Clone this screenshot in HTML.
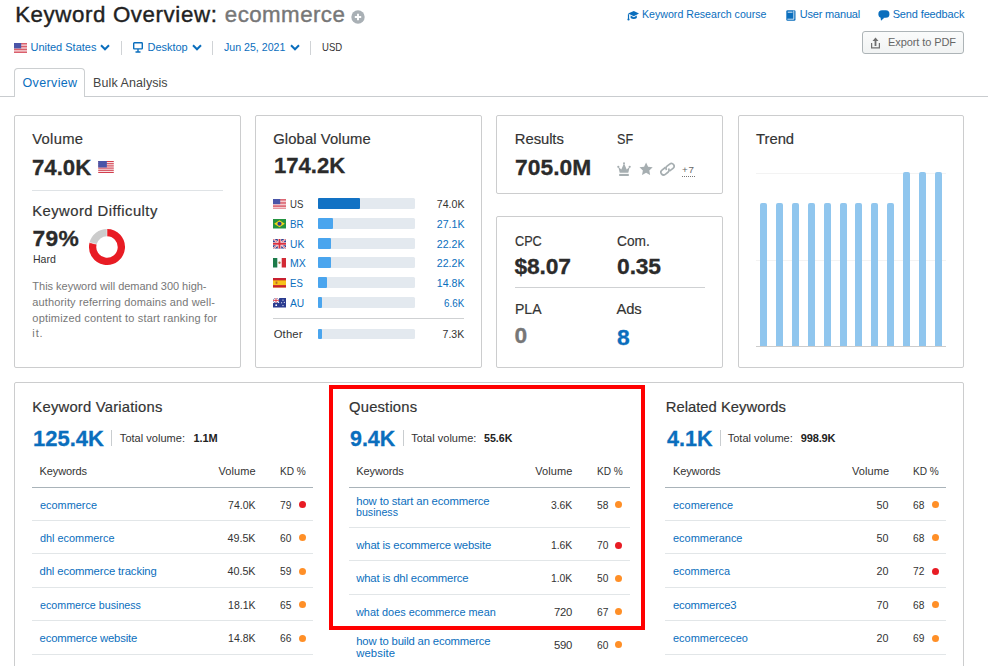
<!DOCTYPE html>
<html lang="en">
<head>
<meta charset="utf-8">
<title>Keyword Overview: ecommerce</title>
<style>
*{box-sizing:border-box;margin:0;padding:0}
html,body{width:988px;height:666px;overflow:hidden;background:#fff}
body{font-family:"Liberation Sans",sans-serif;color:#333;position:relative;font-size:12px}
.a{position:absolute;white-space:nowrap}
.t{position:absolute;white-space:nowrap;line-height:1}
.b{font-weight:bold}
.card{position:absolute;border:1px solid #cccdce;border-radius:2px;background:#fff}
.hl{position:absolute;background:#e3e5e6;height:1px}
.bar{position:absolute;height:11px;background:#e3e9ef;border-radius:1.5px;width:97px}
.bar i{position:absolute;left:0;top:0;height:11px;background:#4aa5ee;border-radius:1px;display:block}
.dot{position:absolute;width:7px;height:7px;border-radius:50%;background:#ff8f27}
.dot.r{background:#e81c24}
.tb{position:absolute;width:7px;background:#90c6ee;border-radius:2px 2px 0 0}
</style>
</head>
<body>
<svg class="a" style="left:351px;top:10px" width="14" height="14" viewBox="0 0 14 14"><circle cx="7" cy="7" r="6.7" fill="#a9b0b5"/><path d="M7 3.800v6.400M3.800 7h6.400" stroke="#fff" stroke-width="1.900"/></svg>
<svg class="a" style="left:14px;top:43px" width="13" height="10" viewBox="0 0 13 10"><rect width="13" height="10" fill="#fff"/><g fill="#cf3040"><rect y="0.00" width="13" height="0.77"/><rect y="1.54" width="13" height="0.77"/><rect y="3.08" width="13" height="0.77"/><rect y="4.61" width="13" height="0.77"/><rect y="6.15" width="13" height="0.77"/><rect y="7.69" width="13" height="0.77"/><rect y="9.23" width="13" height="0.77"/></g><rect width="7.200" height="5.400" fill="#4a55a8"/></svg>
<svg class="a" style="left:100.3px;top:44.300px" width="10" height="7" viewBox="0 0 10 7"><path d="M1 1.300l4 4 4-4" fill="none" stroke="#0a6ebd" stroke-width="2"/></svg>
<div class="a" style="left:121px;top:41px;width:1px;height:14px;background:#d0d3d6"></div>
<svg class="a" style="left:133px;top:42px" width="10" height="11" viewBox="0 0 10 11"><rect x="0.700" y="0.700" width="8.600" height="6.200" rx="0.700" fill="none" stroke="#0a6ebd" stroke-width="1.400"/><path d="M5 7v2.600M2.500 10h5" stroke="#0a6ebd" stroke-width="1.400" fill="none"/></svg>
<svg class="a" style="left:191.5px;top:44.300px" width="10" height="7" viewBox="0 0 10 7"><path d="M1 1.300l4 4 4-4" fill="none" stroke="#0a6ebd" stroke-width="2"/></svg>
<div class="a" style="left:212px;top:41px;width:1px;height:14px;background:#d0d3d6"></div>
<svg class="a" style="left:290px;top:44.300px" width="10" height="7" viewBox="0 0 10 7"><path d="M1 1.300l4 4 4-4" fill="none" stroke="#0a6ebd" stroke-width="2"/></svg>
<div class="a" style="left:310px;top:41px;width:1px;height:14px;background:#d0d3d6"></div>
<svg class="a" style="left:626.500px;top:10px" width="12" height="11" viewBox="0 0 12 11"><path d="M1 3.600L6.800 1 12 3.600 6.800 6.200z" fill="#0a6ebd"/><path d="M3.600 5.600v2.400c1.700 1.300 4.500 1.300 6.200 0V5.600L6.800 7.200z" fill="#0a6ebd"/><path d="M1.500 4.200v5" stroke="#0a6ebd" stroke-width="1.200"/><circle cx="1.500" cy="9.500" r="1.100" fill="#0a6ebd"/></svg>
<svg class="a" style="left:785.500px;top:10px" width="10" height="11" viewBox="0 0 10 11"><rect x="0.300" y="0.300" width="9.200" height="10.400" rx="1.300" fill="#0a6ebd"/><rect x="1.700" y="1.700" width="4.800" height="0.900" fill="#fff"/><path d="M7.800 0.600V9.200H1.400" fill="none" stroke="#fff" stroke-width="0.800"/></svg>
<svg class="a" style="left:877.500px;top:10px" width="12" height="11" viewBox="0 0 12 11"><rect x="0.400" y="0.200" width="11" height="7.600" rx="3.600" fill="#0a6ebd"/><path d="M2.400 6.500L3 10.700 6.600 7.400z" fill="#0a6ebd"/></svg>
<div class="a" style="left:862px;top:31px;width:102px;height:23px;border:1px solid #adb4b7;border-radius:3px;background:linear-gradient(#fafbfb,#f1f3f3)"></div>
<svg class="a" style="left:870px;top:36.500px" width="11" height="12" viewBox="0 0 11 12"><path d="M1.600 5.900V10.900H9.400V5.900" fill="none" stroke="#707070" stroke-width="1.200"/><path d="M5.500 0.600L8.500 4H6.400V8.900H4.600V4H2.500z" fill="#707070"/></svg>
<div class="hl" style="left:0;top:96px;width:988px;background:#c9cccf"></div>
<div class="a" style="left:14px;top:68px;width:71px;height:29px;border:1px solid #cccfd1;border-bottom:0;border-radius:4px 4px 0 0;background:#fff"></div>
<div class="card" style="left:14px;top:115px;width:227px;height:253px"></div>
<div class="card" style="left:255px;top:115px;width:227px;height:253px"></div>
<div class="card" style="left:496px;top:115px;width:227px;height:79px"></div>
<div class="card" style="left:496px;top:216px;width:227px;height:152px"></div>
<div class="card" style="left:738px;top:115px;width:226px;height:253px"></div>
<div class="card" style="left:14px;top:382px;width:950px;height:300px"></div>
<svg class="a" style="left:97.500px;top:161px" width="16" height="12" viewBox="0 0 13 10"><rect width="13" height="10" fill="#fff"/><g fill="#cf3040"><rect y="0.00" width="13" height="0.77"/><rect y="1.54" width="13" height="0.77"/><rect y="3.08" width="13" height="0.77"/><rect y="4.61" width="13" height="0.77"/><rect y="6.15" width="13" height="0.77"/><rect y="7.69" width="13" height="0.77"/><rect y="9.23" width="13" height="0.77"/></g><rect width="7.200" height="5.400" fill="#4a55a8"/></svg>
<div class="hl" style="left:32px;top:190px;width:191px;background:#dfe3e6"></div>
<svg class="a" style="left:87px;top:226.900px" width="40" height="40" viewBox="-20 -20 40 40"><path d="M0 -14.35A14.35 14.35 0 1 1 -13.90 -3.57" fill="none" stroke="#e81c24" stroke-width="7.300"/><path d="M0 -14.35A14.35 14.35 0 0 0 -13.90 -3.57" fill="none" stroke="#cccccc" stroke-width="7.300"/><path d="M0 -10.500V-18.200M-10.17 -2.61L-17.63 -4.53" stroke="#fff" stroke-width="0.500"/></svg>
<svg class="a" style="left:273px;top:199.2px" width="13" height="9.500" viewBox="0 0 13 10" preserveAspectRatio="none"><rect width="13" height="10" fill="#fff"/><g fill="#cf3040"><rect y="0.00" width="13" height="0.77"/><rect y="1.54" width="13" height="0.77"/><rect y="3.08" width="13" height="0.77"/><rect y="4.61" width="13" height="0.77"/><rect y="6.15" width="13" height="0.77"/><rect y="7.69" width="13" height="0.77"/><rect y="9.23" width="13" height="0.77"/></g><rect width="7.200" height="5.400" fill="#4a55a8"/></svg>
<div class="bar" style="left:318px;top:198px"><i style="width:42px;background:#1272c4"></i></div>
<svg class="a" style="left:273px;top:219.2px" width="13" height="9.500" viewBox="0 0 13 10" preserveAspectRatio="none"><rect width="13" height="10" fill="#259440"/><path d="M6.500 1.200L11.800 5 6.500 8.800 1.200 5z" fill="#f7d417"/><circle cx="6.500" cy="5" r="2.100" fill="#2b3f95"/></svg>
<div class="bar" style="left:318px;top:218px"><i style="width:15px;"></i></div>
<svg class="a" style="left:273px;top:239.2px" width="13" height="9.500" viewBox="0 0 13 10" preserveAspectRatio="none"><rect width="13" height="10" fill="#2f3f8f"/><path d="M0 0L13 10M13 0L0 10" stroke="#fff" stroke-width="1.800"/><path d="M0 0L13 10M13 0L0 10" stroke="#d9303f" stroke-width="0.700"/><path d="M6.500 0v10M0 5h13" stroke="#fff" stroke-width="3.400"/><path d="M6.500 0v10M0 5h13" stroke="#d9303f" stroke-width="2"/></svg>
<div class="bar" style="left:318px;top:238px"><i style="width:13px;"></i></div>
<svg class="a" style="left:273px;top:258.2px" width="13" height="9.500" viewBox="0 0 13 10" preserveAspectRatio="none"><rect width="13" height="10" fill="#fff"/><rect width="4.300" height="10" fill="#1d7a4a"/><rect x="8.700" width="4.300" height="10" fill="#d22b35"/><circle cx="6.500" cy="5" r="1.200" fill="#a0794a"/></svg>
<div class="bar" style="left:318px;top:257px"><i style="width:13px;"></i></div>
<svg class="a" style="left:273px;top:278.2px" width="13" height="9.500" viewBox="0 0 13 10" preserveAspectRatio="none"><rect width="13" height="10" fill="#f6c21b"/><rect width="13" height="2.500" fill="#c8202f"/><rect y="7.500" width="13" height="2.500" fill="#c8202f"/><rect x="2.600" y="3.700" width="1.800" height="2.400" fill="#b5652a"/></svg>
<div class="bar" style="left:318px;top:277px"><i style="width:9px;"></i></div>
<svg class="a" style="left:273px;top:298.2px" width="13" height="9.500" viewBox="0 0 13 10" preserveAspectRatio="none"><rect width="13" height="10" fill="#2a3b8f"/><path d="M0 0L6 5M6 0L0 5" stroke="#fff" stroke-width="1.200"/><path d="M3 0v5M0 2.500h6" stroke="#fff" stroke-width="1.800"/><path d="M3 0v5M0 2.500h6" stroke="#d9303f" stroke-width="0.900"/><circle cx="3.200" cy="7.600" r="0.900" fill="#fff"/><circle cx="10" cy="2.200" r="0.600" fill="#fff"/><circle cx="11.300" cy="4.600" r="0.600" fill="#fff"/><circle cx="10" cy="8" r="0.600" fill="#fff"/><circle cx="8.600" cy="5" r="0.600" fill="#fff"/></svg>
<div class="bar" style="left:318px;top:297px"><i style="width:4px;"></i></div>
<div class="hl" style="left:273px;top:318px;width:191px;background:#cfd1d3"></div>
<div class="bar" style="left:318px;top:329px;height:10px"><i style="width:4px;height:10px"></i></div>
<svg class="a" style="left:617px;top:161.500px" width="14" height="14.500" viewBox="0 0 14 14.500"><path d="M1.300 4.800L4.300 7.400 7 1.200 9.700 7.400 12.700 4.800 11.300 10.800H2.700z" fill="#a6aeb1"/><circle cx="7" cy="1.300" r="1" fill="#a6aeb1"/><circle cx="1.300" cy="4.800" r="1.100" fill="#a6aeb1"/><circle cx="12.700" cy="4.800" r="1.100" fill="#a6aeb1"/><rect x="2.200" y="11.900" width="9.600" height="2.200" fill="#a6aeb1"/></svg>
<svg class="a" style="left:638.800px;top:162px" width="14.200" height="13.300" viewBox="0 0 15 14"><path d="M7.500 0.500l2.100 4.500 4.900 0.600-3.600 3.400 0.900 4.800-4.300-2.400-4.300 2.400 0.900-4.800L0.500 5.600l4.900-0.600z" fill="#a6aeb1"/></svg>
<svg class="a" style="left:660px;top:161.800px" width="15" height="14.400" viewBox="0 0 15 14.400"><g transform="translate(7.500,7.200) rotate(-38)" fill="none" stroke="#a6aeb1" stroke-width="1.700"><path d="M-0.300 -2.700H-4.900A2.700 2.700 0 0 0 -4.900 2.700H-1.500A2.700 2.700 0 0 0 1.200 0"/><path d="M0.300 2.700H4.900A2.700 2.700 0 0 0 4.900 -2.700H1.500A2.700 2.700 0 0 0 -1.200 0"/></g></svg>
<div class="a" style="left:681.500px;top:176px;width:13px;height:0;border-top:1px dotted #777"></div>
<div class="hl" style="left:515px;top:287px;width:190px;background:#cfd1d3"></div>
<div class="hl" style="left:756px;top:172.500px;width:190px;background:#f3f3f3"></div>
<div class="hl" style="left:756px;top:259.700px;width:190px;background:#f3f3f3"></div>
<div class="tb" style="left:760.0px;top:203px;height:143px"></div>
<div class="tb" style="left:775.9px;top:203px;height:143px"></div>
<div class="tb" style="left:791.8px;top:203px;height:143px"></div>
<div class="tb" style="left:807.7px;top:203px;height:143px"></div>
<div class="tb" style="left:823.6px;top:203px;height:143px"></div>
<div class="tb" style="left:839.5px;top:203px;height:143px"></div>
<div class="tb" style="left:855.4px;top:203px;height:143px"></div>
<div class="tb" style="left:871.3px;top:203px;height:143px"></div>
<div class="tb" style="left:887.2px;top:203px;height:143px"></div>
<div class="tb" style="left:903.1px;top:172px;height:174px"></div>
<div class="tb" style="left:919.0px;top:172px;height:174px"></div>
<div class="tb" style="left:934.9px;top:172px;height:174px"></div>
<div class="hl" style="left:756px;top:346px;width:190px;background:#cccccc"></div>
<div class="a" style="left:111.0px;top:430px;width:1px;height:16px;background:#c9cdd0"></div>
<div class="hl" style="left:32.0px;top:487px;width:281px;background:#a9b3b9"></div>
<div class="hl" style="left:32.0px;top:520px;width:281px;background:#e2e6e8"></div>
<div class="hl" style="left:32.0px;top:553px;width:281px;background:#e2e6e8"></div>
<div class="hl" style="left:32.0px;top:587px;width:281px;background:#e2e6e8"></div>
<div class="hl" style="left:32.0px;top:620px;width:281px;background:#e2e6e8"></div>
<div class="hl" style="left:32.0px;top:654px;width:281px;background:#e2e6e8"></div>
<div class="dot r" style="left:298.5px;top:501.3px"></div>
<div class="dot" style="left:298.5px;top:534.3px"></div>
<div class="dot" style="left:298.5px;top:567.7px"></div>
<div class="dot" style="left:298.5px;top:601.4px"></div>
<div class="dot" style="left:298.5px;top:634.7px"></div>
<div class="a" style="left:403.0px;top:430px;width:1px;height:16px;background:#c9cdd0"></div>
<div class="hl" style="left:348.7px;top:487px;width:281px;background:#a9b3b9"></div>
<div class="hl" style="left:348.7px;top:527px;width:281px;background:#e2e6e8"></div>
<div class="hl" style="left:348.7px;top:560px;width:281px;background:#e2e6e8"></div>
<div class="hl" style="left:348.7px;top:594px;width:281px;background:#e2e6e8"></div>
<div class="hl" style="left:348.7px;top:628px;width:281px;background:#e2e6e8"></div>
<div class="dot" style="left:615.2px;top:501.3px"></div>
<div class="dot r" style="left:615.2px;top:541.5px"></div>
<div class="dot" style="left:615.2px;top:574.8px"></div>
<div class="dot" style="left:615.2px;top:608.2px"></div>
<div class="dot" style="left:615.2px;top:641.2px"></div>
<div class="a" style="left:719.5px;top:430px;width:1px;height:16px;background:#c9cdd0"></div>
<div class="hl" style="left:665.4px;top:487px;width:281px;background:#a9b3b9"></div>
<div class="hl" style="left:665.4px;top:520px;width:281px;background:#e2e6e8"></div>
<div class="hl" style="left:665.4px;top:553px;width:281px;background:#e2e6e8"></div>
<div class="hl" style="left:665.4px;top:587px;width:281px;background:#e2e6e8"></div>
<div class="hl" style="left:665.4px;top:620px;width:281px;background:#e2e6e8"></div>
<div class="hl" style="left:665.4px;top:654px;width:281px;background:#e2e6e8"></div>
<div class="dot" style="left:931.9px;top:501.3px"></div>
<div class="dot" style="left:931.9px;top:534.3px"></div>
<div class="dot r" style="left:931.9px;top:567.7px"></div>
<div class="dot" style="left:931.9px;top:601.4px"></div>
<div class="dot" style="left:931.9px;top:634.7px"></div>
<div class="a" style="left:329px;top:385px;width:316px;height:245px;border:4px solid #ff0000"></div>
<div class="t" style="top:4.00px;font-size:22.3px;color:#222;-webkit-text-stroke:0.4px #222;letter-spacing:0.603px;left:15.13px;">Keyword Overview:</div>
<div class="t" style="top:4.00px;font-size:22.3px;color:#777;-webkit-text-stroke:0.4px #777;letter-spacing:0.441px;left:224.83px;">ecommerce</div>
<div class="t" style="top:42.00px;font-size:11px;color:#0a6ebd;letter-spacing:-0.008px;left:30.47px;">United States</div>
<div class="t" style="top:42.00px;font-size:11px;color:#0a6ebd;letter-spacing:-0.035px;left:147.47px;">Desktop</div>
<div class="t" style="top:42.00px;font-size:11px;color:#0a6ebd;transform:scaleX(0.9642);transform-origin:0 0;left:224.17px;">Jun 25, 2021</div>
<div class="t" style="top:42.00px;font-size:11px;color:#333;transform:scaleX(0.8672);transform-origin:0 0;left:322.37px;">USD</div>
<div class="t" style="top:9.00px;font-size:11px;color:#0a6ebd;transform:scaleX(0.9646);transform-origin:0 0;left:642.07px;">Keyword Research course</div>
<div class="t" style="top:9.00px;font-size:11px;color:#0a6ebd;letter-spacing:-0.181px;left:799.67px;">User manual</div>
<div class="t" style="top:9.00px;font-size:11px;color:#0a6ebd;letter-spacing:-0.137px;left:892.67px;">Send feedback</div>
<div class="t" style="top:37.00px;font-size:11px;color:#666;letter-spacing:-0.094px;left:888.07px;">Export to PDF</div>
<div class="t" style="top:77.00px;font-size:12.5px;color:#0a6ebd;letter-spacing:0.362px;left:22.52px;">Overview</div>
<div class="t" style="top:77.00px;font-size:12.5px;color:#444;letter-spacing:0.072px;left:93.12px;">Bulk Analysis</div>
<div class="t" style="top:132.00px;font-size:14.8px;color:#333;-webkit-text-stroke:0.18px #333;letter-spacing:0.316px;left:32.16px;">Volume</div>
<div class="t b" style="top:156.00px;font-size:22.8px;color:#2b2b2b;-webkit-text-stroke:0.3px #2b2b2b;transform:scaleX(0.9736);transform-origin:0 0;left:32.42px;">74.0K</div>
<div class="t" style="top:204.00px;font-size:14.8px;color:#333;-webkit-text-stroke:0.18px #333;letter-spacing:0.454px;left:32.26px;">Keyword Difficulty</div>
<div class="t b" style="top:227.00px;font-size:22.8px;color:#2b2b2b;-webkit-text-stroke:0.3px #2b2b2b;letter-spacing:0.350px;left:32.52px;">79%</div>
<div class="t" style="top:254.00px;font-size:11px;color:#333;transform:scaleX(0.9583);transform-origin:0 0;left:32.67px;">Hard</div>
<div class="t" style="top:281.00px;font-size:11px;color:#777;letter-spacing:-0.022px;left:32.37px;">This keyword will demand 300 high-</div>
<div class="t" style="top:297.00px;font-size:11px;color:#777;letter-spacing:0.129px;left:32.37px;">authority referring domains and well-</div>
<div class="t" style="top:313.00px;font-size:11px;color:#777;letter-spacing:0.187px;left:32.37px;">optimized content to start ranking for</div>
<div class="t" style="top:328.00px;font-size:11px;color:#777;letter-spacing:0.844px;left:32.37px;">it.</div>
<div class="t" style="top:132.00px;font-size:14.8px;color:#333;-webkit-text-stroke:0.18px #333;letter-spacing:0.099px;left:273.26px;">Global Volume</div>
<div class="t b" style="top:154.00px;font-size:22.8px;color:#2b2b2b;-webkit-text-stroke:0.3px #2b2b2b;transform:scaleX(0.9690);transform-origin:0 0;left:274.32px;">174.2K</div>
<div class="t" style="top:199.00px;font-size:11.3px;color:#333;transform:scaleX(0.8500);transform-origin:0 0;left:289.96px;">US</div>
<div class="t" style="top:199.00px;font-size:11.3px;color:#333;transform:scaleX(0.9402);transform-origin:100% 0;right:523.56px;">74.0K</div>
<div class="t" style="top:219.00px;font-size:11.3px;color:#0a6ebd;transform:scaleX(0.8702);transform-origin:0 0;left:289.96px;">BR</div>
<div class="t" style="top:219.00px;font-size:11.3px;color:#0a6ebd;transform:scaleX(0.9402);transform-origin:100% 0;right:523.56px;">27.1K</div>
<div class="t" style="top:239.00px;font-size:11.3px;color:#0a6ebd;transform:scaleX(0.9084);transform-origin:0 0;left:289.96px;">UK</div>
<div class="t" style="top:239.00px;font-size:11.3px;color:#0a6ebd;transform:scaleX(0.9402);transform-origin:100% 0;right:523.56px;">22.2K</div>
<div class="t" style="top:258.00px;font-size:11.3px;color:#0a6ebd;transform:scaleX(0.9299);transform-origin:0 0;left:289.96px;">MX</div>
<div class="t" style="top:258.00px;font-size:11.3px;color:#0a6ebd;transform:scaleX(0.9402);transform-origin:100% 0;right:523.56px;">22.2K</div>
<div class="t" style="top:278.00px;font-size:11.3px;color:#0a6ebd;transform:scaleX(0.8500);transform-origin:0 0;left:289.96px;">ES</div>
<div class="t" style="top:278.00px;font-size:11.3px;color:#0a6ebd;transform:scaleX(0.9402);transform-origin:100% 0;right:523.56px;">14.8K</div>
<div class="t" style="top:298.00px;font-size:11.3px;color:#0a6ebd;transform:scaleX(0.9084);transform-origin:0 0;left:289.96px;">AU</div>
<div class="t" style="top:298.00px;font-size:11.3px;color:#0a6ebd;transform:scaleX(0.8673);transform-origin:100% 0;right:523.56px;">6.6K</div>
<div class="t" style="top:329.00px;font-size:11.3px;color:#333;letter-spacing:0.150px;left:273.66px;">Other</div>
<div class="t" style="top:329.00px;font-size:11.3px;color:#333;transform:scaleX(0.9318);transform-origin:100% 0;right:523.56px;">7.3K</div>
<div class="t" style="top:132.00px;font-size:14.8px;color:#333;-webkit-text-stroke:0.18px #333;letter-spacing:-0.067px;left:514.86px;">Results</div>
<div class="t" style="top:132.00px;font-size:14.8px;color:#333;-webkit-text-stroke:0.18px #333;transform:scaleX(0.8500);transform-origin:0 0;left:616.56px;">SF</div>
<div class="t b" style="top:156.00px;font-size:22.8px;color:#2b2b2b;-webkit-text-stroke:0.3px #2b2b2b;letter-spacing:-0.001px;left:515.12px;">705.0M</div>
<div class="t" style="top:165.00px;font-size:9.8px;color:#666;letter-spacing:0.882px;left:681.91px;">+7</div>
<div class="t" style="top:234.00px;font-size:14.8px;color:#333;-webkit-text-stroke:0.18px #333;transform:scaleX(0.8557);transform-origin:0 0;left:514.76px;">CPC</div>
<div class="t" style="top:234.00px;font-size:14.8px;color:#333;-webkit-text-stroke:0.18px #333;transform:scaleX(0.9259);transform-origin:0 0;left:617.36px;">Com.</div>
<div class="t b" style="top:255.00px;font-size:22.8px;color:#2b2b2b;-webkit-text-stroke:0.3px #2b2b2b;letter-spacing:-0.156px;left:514.52px;">$8.07</div>
<div class="t b" style="top:255.00px;font-size:22.8px;color:#2b2b2b;-webkit-text-stroke:0.3px #2b2b2b;letter-spacing:-0.145px;left:617.12px;">0.35</div>
<div class="t" style="top:302.00px;font-size:14.8px;color:#333;-webkit-text-stroke:0.18px #333;transform:scaleX(0.9489);transform-origin:0 0;left:514.76px;">PLA</div>
<div class="t" style="top:302.00px;font-size:14.8px;color:#333;-webkit-text-stroke:0.18px #333;letter-spacing:-0.130px;left:616.46px;">Ads</div>
<div class="t b" style="top:324.00px;font-size:22.8px;color:#777;-webkit-text-stroke:0.3px #777;left:514.52px;">0</div>
<div class="t b" style="top:326.00px;font-size:22.8px;color:#0a6ebd;-webkit-text-stroke:0.3px #0a6ebd;left:617.12px;">8</div>
<div class="t" style="top:132.00px;font-size:14.8px;color:#333;-webkit-text-stroke:0.18px #333;letter-spacing:-0.017px;left:756.06px;">Trend</div>
<div class="t" style="top:400.00px;font-size:14.8px;color:#333;-webkit-text-stroke:0.18px #333;letter-spacing:0.209px;left:32.36px;">Keyword Variations</div>
<div class="t b" style="top:427.00px;font-size:22.8px;color:#0a6ebd;-webkit-text-stroke:0.3px #0a6ebd;transform:scaleX(0.9636);transform-origin:0 0;left:33.32px;">125.4K</div>
<div class="t" style="top:433.00px;font-size:11px;color:#333;letter-spacing:0.028px;left:119.87px;">Total volume:</div>
<div class="t b" style="top:433.00px;font-size:11px;color:#222;letter-spacing:-0.106px;left:193.47px;">1.1M</div>
<div class="t" style="top:466.00px;font-size:11px;color:#333;letter-spacing:-0.107px;left:39.57px;">Keywords</div>
<div class="t" style="top:466.00px;font-size:11px;color:#333;letter-spacing:0.089px;right:732.28px;">Volume</div>
<div class="t" style="top:466.00px;font-size:11px;color:#333;transform:scaleX(0.9191);transform-origin:0 0;left:279.87px;">KD %</div>
<div class="t" style="top:500.00px;font-size:11.3px;color:#0a6ebd;transform:scaleX(0.9653);transform-origin:0 0;left:39.56px;">ecommerce</div>
<div class="t" style="top:500.00px;font-size:11.3px;color:#333;transform:scaleX(0.9300);transform-origin:100% 0;right:732.36px;">74.0K</div>
<div class="t" style="top:500.00px;font-size:11.3px;color:#333;transform:scaleX(0.9036);transform-origin:0 0;left:279.86px;">79</div>
<div class="t" style="top:533.00px;font-size:11.3px;color:#0a6ebd;transform:scaleX(0.9641);transform-origin:0 0;left:39.56px;">dhl ecommerce</div>
<div class="t" style="top:533.00px;font-size:11.3px;color:#333;transform:scaleX(0.9503);transform-origin:100% 0;right:732.36px;">49.5K</div>
<div class="t" style="top:533.00px;font-size:11.3px;color:#333;transform:scaleX(0.9036);transform-origin:0 0;left:279.86px;">60</div>
<div class="t" style="top:566.00px;font-size:11.3px;color:#0a6ebd;letter-spacing:-0.131px;left:39.56px;">dhl ecommerce tracking</div>
<div class="t" style="top:566.00px;font-size:11.3px;color:#333;transform:scaleX(0.9503);transform-origin:100% 0;right:732.36px;">40.5K</div>
<div class="t" style="top:566.00px;font-size:11.3px;color:#333;transform:scaleX(0.9036);transform-origin:0 0;left:279.86px;">59</div>
<div class="t" style="top:600.00px;font-size:11.3px;color:#0a6ebd;transform:scaleX(0.9458);transform-origin:0 0;left:39.56px;">ecommerce business</div>
<div class="t" style="top:600.00px;font-size:11.3px;color:#333;transform:scaleX(0.9300);transform-origin:100% 0;right:732.36px;">18.1K</div>
<div class="t" style="top:600.00px;font-size:11.3px;color:#333;transform:scaleX(0.9036);transform-origin:0 0;left:279.86px;">65</div>
<div class="t" style="top:633.00px;font-size:11.3px;color:#0a6ebd;letter-spacing:-0.174px;left:39.56px;">ecommerce website</div>
<div class="t" style="top:633.00px;font-size:11.3px;color:#333;transform:scaleX(0.9300);transform-origin:100% 0;right:732.36px;">14.8K</div>
<div class="t" style="top:633.00px;font-size:11.3px;color:#333;transform:scaleX(0.9036);transform-origin:0 0;left:279.86px;">66</div>
<div class="t" style="top:400.00px;font-size:14.8px;color:#333;-webkit-text-stroke:0.18px #333;letter-spacing:0.177px;left:349.06px;">Questions</div>
<div class="t b" style="top:427.00px;font-size:22.8px;color:#0a6ebd;-webkit-text-stroke:0.3px #0a6ebd;transform:scaleX(0.9394);transform-origin:0 0;left:350.02px;">9.4K</div>
<div class="t" style="top:433.00px;font-size:11px;color:#333;letter-spacing:0.028px;left:411.27px;">Total volume:</div>
<div class="t b" style="top:433.00px;font-size:11px;color:#222;transform:scaleX(0.9656);transform-origin:0 0;left:484.17px;">55.6K</div>
<div class="t" style="top:466.00px;font-size:11px;color:#333;letter-spacing:-0.107px;left:356.27px;">Keywords</div>
<div class="t" style="top:466.00px;font-size:11px;color:#333;letter-spacing:0.089px;right:415.58px;">Volume</div>
<div class="t" style="top:466.00px;font-size:11px;color:#333;transform:scaleX(0.9191);transform-origin:0 0;left:596.57px;">KD %</div>
<div class="t" style="top:496.00px;font-size:11.3px;color:#0a6ebd;letter-spacing:-0.120px;left:356.26px;">how to start an ecommerce</div>
<div class="t" style="top:507.00px;font-size:11.3px;color:#0a6ebd;transform:scaleX(0.9411);transform-origin:0 0;left:356.26px;">business</div>
<div class="t" style="top:500.00px;font-size:11.3px;color:#333;transform:scaleX(0.9189);transform-origin:100% 0;right:415.66px;">3.6K</div>
<div class="t" style="top:500.00px;font-size:11.3px;color:#333;transform:scaleX(0.9036);transform-origin:0 0;left:596.56px;">58</div>
<div class="t" style="top:540.00px;font-size:11.3px;color:#0a6ebd;letter-spacing:-0.158px;left:356.26px;">what is ecommerce website</div>
<div class="t" style="top:540.00px;font-size:11.3px;color:#333;transform:scaleX(0.9189);transform-origin:100% 0;right:415.66px;">1.6K</div>
<div class="t" style="top:540.00px;font-size:11.3px;color:#333;transform:scaleX(0.9036);transform-origin:0 0;left:596.56px;">70</div>
<div class="t" style="top:573.00px;font-size:11.3px;color:#0a6ebd;letter-spacing:-0.163px;left:356.26px;">what is dhl ecommerce</div>
<div class="t" style="top:573.00px;font-size:11.3px;color:#333;transform:scaleX(0.9189);transform-origin:100% 0;right:415.66px;">1.0K</div>
<div class="t" style="top:573.00px;font-size:11.3px;color:#333;transform:scaleX(0.9036);transform-origin:0 0;left:596.56px;">50</div>
<div class="t" style="top:607.00px;font-size:11.3px;color:#0a6ebd;transform:scaleX(0.9636);transform-origin:0 0;left:356.26px;">what does ecommerce mean</div>
<div class="t" style="top:607.00px;font-size:11.3px;color:#333;letter-spacing:-0.197px;right:415.86px;">720</div>
<div class="t" style="top:607.00px;font-size:11.3px;color:#333;transform:scaleX(0.9036);transform-origin:0 0;left:596.56px;">67</div>
<div class="t" style="top:636.00px;font-size:11.3px;color:#0a6ebd;letter-spacing:-0.162px;left:356.26px;">how to build an ecommerce</div>
<div class="t" style="top:648.00px;font-size:11.3px;color:#0a6ebd;letter-spacing:0.075px;left:356.26px;">website</div>
<div class="t" style="top:640.00px;font-size:11.3px;color:#333;letter-spacing:-0.197px;right:415.86px;">590</div>
<div class="t" style="top:640.00px;font-size:11.3px;color:#333;transform:scaleX(0.9036);transform-origin:0 0;left:596.56px;">60</div>
<div class="t" style="top:400.00px;font-size:14.8px;color:#333;-webkit-text-stroke:0.18px #333;letter-spacing:0.010px;left:665.76px;">Related Keywords</div>
<div class="t b" style="top:427.00px;font-size:22.8px;color:#0a6ebd;-webkit-text-stroke:0.3px #0a6ebd;transform:scaleX(0.9457);transform-origin:0 0;left:666.72px;">4.1K</div>
<div class="t" style="top:433.00px;font-size:11px;color:#333;letter-spacing:0.028px;left:727.67px;">Total volume:</div>
<div class="t b" style="top:433.00px;font-size:11px;color:#222;letter-spacing:-0.187px;left:800.87px;">998.9K</div>
<div class="t" style="top:466.00px;font-size:11px;color:#333;letter-spacing:-0.107px;left:672.97px;">Keywords</div>
<div class="t" style="top:466.00px;font-size:11px;color:#333;letter-spacing:0.089px;right:98.88px;">Volume</div>
<div class="t" style="top:466.00px;font-size:11px;color:#333;transform:scaleX(0.9191);transform-origin:0 0;left:913.27px;">KD %</div>
<div class="t" style="top:500.00px;font-size:11.3px;color:#0a6ebd;transform:scaleX(0.9677);transform-origin:0 0;left:672.96px;">ecomerence</div>
<div class="t" style="top:500.00px;font-size:11.3px;color:#333;transform:scaleX(0.9513);transform-origin:100% 0;right:98.96px;">50</div>
<div class="t" style="top:500.00px;font-size:11.3px;color:#333;transform:scaleX(0.9036);transform-origin:0 0;left:913.26px;">68</div>
<div class="t" style="top:533.00px;font-size:11.3px;color:#0a6ebd;transform:scaleX(0.9705);transform-origin:0 0;left:672.96px;">ecommerance</div>
<div class="t" style="top:533.00px;font-size:11.3px;color:#333;transform:scaleX(0.9513);transform-origin:100% 0;right:98.96px;">50</div>
<div class="t" style="top:533.00px;font-size:11.3px;color:#333;transform:scaleX(0.9036);transform-origin:0 0;left:913.26px;">68</div>
<div class="t" style="top:566.00px;font-size:11.3px;color:#0a6ebd;transform:scaleX(0.9669);transform-origin:0 0;left:672.96px;">ecommerca</div>
<div class="t" style="top:566.00px;font-size:11.3px;color:#333;transform:scaleX(0.9513);transform-origin:100% 0;right:98.96px;">20</div>
<div class="t" style="top:566.00px;font-size:11.3px;color:#333;transform:scaleX(0.9036);transform-origin:0 0;left:913.26px;">72</div>
<div class="t" style="top:600.00px;font-size:11.3px;color:#0a6ebd;letter-spacing:-0.181px;left:672.96px;">ecommerce3</div>
<div class="t" style="top:600.00px;font-size:11.3px;color:#333;transform:scaleX(0.9513);transform-origin:100% 0;right:98.96px;">70</div>
<div class="t" style="top:600.00px;font-size:11.3px;color:#333;transform:scaleX(0.9036);transform-origin:0 0;left:913.26px;">68</div>
<div class="t" style="top:633.00px;font-size:11.3px;color:#0a6ebd;transform:scaleX(0.9693);transform-origin:0 0;left:672.96px;">ecommerceceo</div>
<div class="t" style="top:633.00px;font-size:11.3px;color:#333;transform:scaleX(0.9513);transform-origin:100% 0;right:98.96px;">20</div>
<div class="t" style="top:633.00px;font-size:11.3px;color:#333;transform:scaleX(0.9036);transform-origin:0 0;left:913.26px;">69</div>
</body>
</html>
